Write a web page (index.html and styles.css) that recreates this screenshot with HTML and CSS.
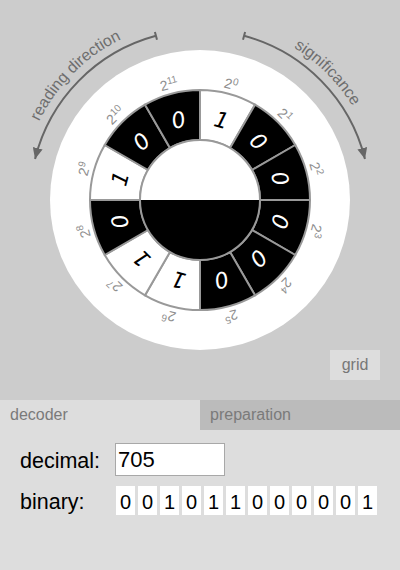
FILE: index.html
```html
<!DOCTYPE html>
<html>
<head>
<meta charset="utf-8">
<link rel="stylesheet" href="styles.css">
</head>
<body>
<div class="app">
  <div class="stage">
    <svg class="wheel" width="400" height="350" viewBox="0 0 400 350">
      <defs>
        <marker id="head" markerUnits="userSpaceOnUse" markerWidth="12" markerHeight="10" refX="11" refY="5" orient="auto">
          <path d="M0,0 L11,5 L0,10 Z" class="head"/>
        </marker>
        <path id="tp-left" d="M23.7,168.9 A179,179 0 0 1 168.9,23.7"/>
        <path id="tp-right" d="M231.1,23.7 A179,179 0 0 1 376.3,168.9"/>
      </defs>

      <path class="guide" d="M156.0,35.8 A170,170 0 0 0 35.05,158.9" marker-end="url(#head)"/>
      <line class="guide" x1="157.0" y1="39.7" x2="154.9" y2="31.9"/>
      <path class="guide" d="M244.0,35.8 A170,170 0 0 1 364.95,158.9" marker-end="url(#head)"/>
      <line class="guide" x1="243.0" y1="39.7" x2="245.1" y2="31.9"/>

      <text class="arc-text"><textPath href="#tp-left" startOffset="50%">reading direction</textPath></text>
      <text class="arc-text"><textPath href="#tp-right" startOffset="50%">significance</textPath></text>

      <circle class="disk" cx="200" cy="200" r="150"/>

      <g transform="rotate(0 200 200)">
        <path class="seg on" d="M200,90 A110,110 0 0 1 255,104.74 L230,148.04 A60,60 0 0 0 200,140 Z"/>
        <text class="digit dark" transform="rotate(15 200 200)" x="200" y="125">1</text>
        <text class="pow" transform="rotate(15 200 200)" x="200" y="85">2<tspan class="sup" dy="-5">0</tspan></text>
      </g>
      <g transform="rotate(30 200 200)">
        <path class="seg off" d="M200,90 A110,110 0 0 1 255,104.74 L230,148.04 A60,60 0 0 0 200,140 Z"/>
        <text class="digit light" transform="rotate(15 200 200)" x="200" y="125">0</text>
        <text class="pow" transform="rotate(15 200 200)" x="200" y="85">2<tspan class="sup" dy="-5">1</tspan></text>
      </g>
      <g transform="rotate(60 200 200)">
        <path class="seg off" d="M200,90 A110,110 0 0 1 255,104.74 L230,148.04 A60,60 0 0 0 200,140 Z"/>
        <text class="digit light" transform="rotate(15 200 200)" x="200" y="125">0</text>
        <text class="pow" transform="rotate(15 200 200)" x="200" y="85">2<tspan class="sup" dy="-5">2</tspan></text>
      </g>
      <g transform="rotate(90 200 200)">
        <path class="seg off" d="M200,90 A110,110 0 0 1 255,104.74 L230,148.04 A60,60 0 0 0 200,140 Z"/>
        <text class="digit light" transform="rotate(15 200 200)" x="200" y="125">0</text>
        <text class="pow" transform="rotate(15 200 200)" x="200" y="85">2<tspan class="sup" dy="-5">3</tspan></text>
      </g>
      <g transform="rotate(120 200 200)">
        <path class="seg off" d="M200,90 A110,110 0 0 1 255,104.74 L230,148.04 A60,60 0 0 0 200,140 Z"/>
        <text class="digit light" transform="rotate(15 200 200)" x="200" y="125">0</text>
        <text class="pow" transform="rotate(15 200 200)" x="200" y="85">2<tspan class="sup" dy="-5">4</tspan></text>
      </g>
      <g transform="rotate(150 200 200)">
        <path class="seg off" d="M200,90 A110,110 0 0 1 255,104.74 L230,148.04 A60,60 0 0 0 200,140 Z"/>
        <text class="digit light" transform="rotate(15 200 200)" x="200" y="125">0</text>
        <text class="pow" transform="rotate(15 200 200)" x="200" y="85">2<tspan class="sup" dy="-5">5</tspan></text>
      </g>
      <g transform="rotate(180 200 200)">
        <path class="seg on" d="M200,90 A110,110 0 0 1 255,104.74 L230,148.04 A60,60 0 0 0 200,140 Z"/>
        <text class="digit dark" transform="rotate(15 200 200)" x="200" y="125">1</text>
        <text class="pow" transform="rotate(15 200 200)" x="200" y="85">2<tspan class="sup" dy="-5">6</tspan></text>
      </g>
      <g transform="rotate(210 200 200)">
        <path class="seg on" d="M200,90 A110,110 0 0 1 255,104.74 L230,148.04 A60,60 0 0 0 200,140 Z"/>
        <text class="digit dark" transform="rotate(15 200 200)" x="200" y="125">1</text>
        <text class="pow" transform="rotate(15 200 200)" x="200" y="85">2<tspan class="sup" dy="-5">7</tspan></text>
      </g>
      <g transform="rotate(240 200 200)">
        <path class="seg off" d="M200,90 A110,110 0 0 1 255,104.74 L230,148.04 A60,60 0 0 0 200,140 Z"/>
        <text class="digit light" transform="rotate(15 200 200)" x="200" y="125">0</text>
        <text class="pow" transform="rotate(15 200 200)" x="200" y="85">2<tspan class="sup" dy="-5">8</tspan></text>
      </g>
      <g transform="rotate(270 200 200)">
        <path class="seg on" d="M200,90 A110,110 0 0 1 255,104.74 L230,148.04 A60,60 0 0 0 200,140 Z"/>
        <text class="digit dark" transform="rotate(15 200 200)" x="200" y="125">1</text>
        <text class="pow" transform="rotate(15 200 200)" x="200" y="85">2<tspan class="sup" dy="-5">9</tspan></text>
      </g>
      <g transform="rotate(300 200 200)">
        <path class="seg off" d="M200,90 A110,110 0 0 1 255,104.74 L230,148.04 A60,60 0 0 0 200,140 Z"/>
        <text class="digit light" transform="rotate(15 200 200)" x="200" y="125">0</text>
        <text class="pow" transform="rotate(15 200 200)" x="200" y="85">2<tspan class="sup" dy="-5">10</tspan></text>
      </g>
      <g transform="rotate(330 200 200)">
        <path class="seg off" d="M200,90 A110,110 0 0 1 255,104.74 L230,148.04 A60,60 0 0 0 200,140 Z"/>
        <text class="digit light" transform="rotate(15 200 200)" x="200" y="125">0</text>
        <text class="pow" transform="rotate(15 200 200)" x="200" y="85">2<tspan class="sup" dy="-5">11</tspan></text>
      </g>

      <path class="half-top" d="M140,200 A60,60 0 0 1 260,200 Z"/>
      <path class="half-bottom" d="M140,200 A60,60 0 0 0 260,200 Z"/>
      <circle class="hub" cx="200" cy="200" r="60"/>
    </svg>
    <div class="tools">
      <div class="grid-btn">grid</div>
    </div>
  </div>

  <div class="tabs">
    <div class="tab active">decoder</div>
    <div class="tab">preparation</div>
  </div>

  <div class="panel">
    <div class="row">
      <div class="label">decimal:</div>
      <input class="dec" type="text" value="705">
    </div>
    <div class="row">
      <div class="label">binary:</div>
      <div class="bits">
        <span class="bit">0</span><span class="bit">0</span><span class="bit">1</span><span class="bit">0</span><span class="bit">1</span><span class="bit">1</span><span class="bit">0</span><span class="bit">0</span><span class="bit">0</span><span class="bit">0</span><span class="bit">0</span><span class="bit">1</span>
      </div>
    </div>
  </div>
</div>
</body>
</html>
```

FILE: styles.css
```css
html, body {
  margin: 0;
  padding: 0;
  background: #dddddd;
}

body {
  font-family: "Liberation Sans", Arial, sans-serif;
}

.app {
  width: 400px;
  height: 570px;
  display: flex;
  flex-direction: column;
}

.stage {
  height: 400px;
  background: #cccccc;
  display: flex;
  flex-direction: column;
}

.wheel {
  display: block;
}

.guide {
  fill: none;
  stroke: #666666;
  stroke-width: 2;
}

.head {
  fill: #666666;
}

.arc-text {
  font-family: "Liberation Sans", Arial, sans-serif;
  font-size: 16px;
  fill: #6e6e6e;
  text-anchor: middle;
}

.disk {
  fill: #ffffff;
}

.seg {
  stroke: #999999;
  stroke-width: 2;
}

.seg.on {
  fill: #ffffff;
}

.seg.off {
  fill: #000000;
}

.digit {
  font-family: "DejaVu Sans", sans-serif;
  font-style: italic;
  font-size: 22px;
  text-anchor: middle;
}

.digit.dark {
  fill: #000000;
}

.digit.light {
  fill: #ffffff;
}

.pow {
  font-family: "Liberation Sans", Arial, sans-serif;
  font-size: 14px;
  fill: #8e8e8e;
  text-anchor: middle;
}

.sup {
  font-size: 10px;
}

.half-top {
  fill: #ffffff;
}

.half-bottom {
  fill: #000000;
}

.hub {
  fill: none;
  stroke: #999999;
  stroke-width: 2;
}

.tools {
  height: 50px;
  display: flex;
  justify-content: flex-end;
  align-items: flex-start;
  padding-right: 20px;
}

.grid-btn {
  width: 50px;
  height: 30px;
  background: #dddddd;
  color: #777777;
  font-size: 16px;
  line-height: 30px;
  text-align: center;
}

.tabs {
  height: 30px;
  display: flex;
}

.tab {
  flex: 1 1 0;
  background: #bbbbbb;
  color: #7a7a7a;
  font-size: 16px;
  line-height: 30px;
  padding-left: 10px;
}

.tab.active {
  background: #dddddd;
}

.panel {
  flex: 1;
  background: #dddddd;
  padding-top: 13px;
  display: flex;
  flex-direction: column;
  gap: 10px;
}

.row {
  display: flex;
  align-items: center;
}

.label {
  flex: 0 0 115px;
  box-sizing: border-box;
  padding-left: 20px;
  padding-top: 3px;
  font-size: 21.5px;
  white-space: nowrap;
  color: #000000;
}

.dec {
  flex: 0 0 110px;
  box-sizing: border-box;
  width: 110px;
  height: 33px;
  margin: 0;
  border: 1px solid #a8a8a8;
  background: #ffffff;
  padding: 0 0 0 2px;
  font-family: "Liberation Sans", Arial, sans-serif;
  font-size: 22px;
  color: #000000;
  outline: none;
}

.bits {
  display: flex;
  gap: 3px;
  padding-left: 1px;
}

.bit {
  box-sizing: border-box;
  width: 19px;
  height: 29px;
  padding-top: 3px;
  line-height: 26px;
  background: #ffffff;
  font-size: 20px;
  text-align: center;
  color: #000000;
}
```
